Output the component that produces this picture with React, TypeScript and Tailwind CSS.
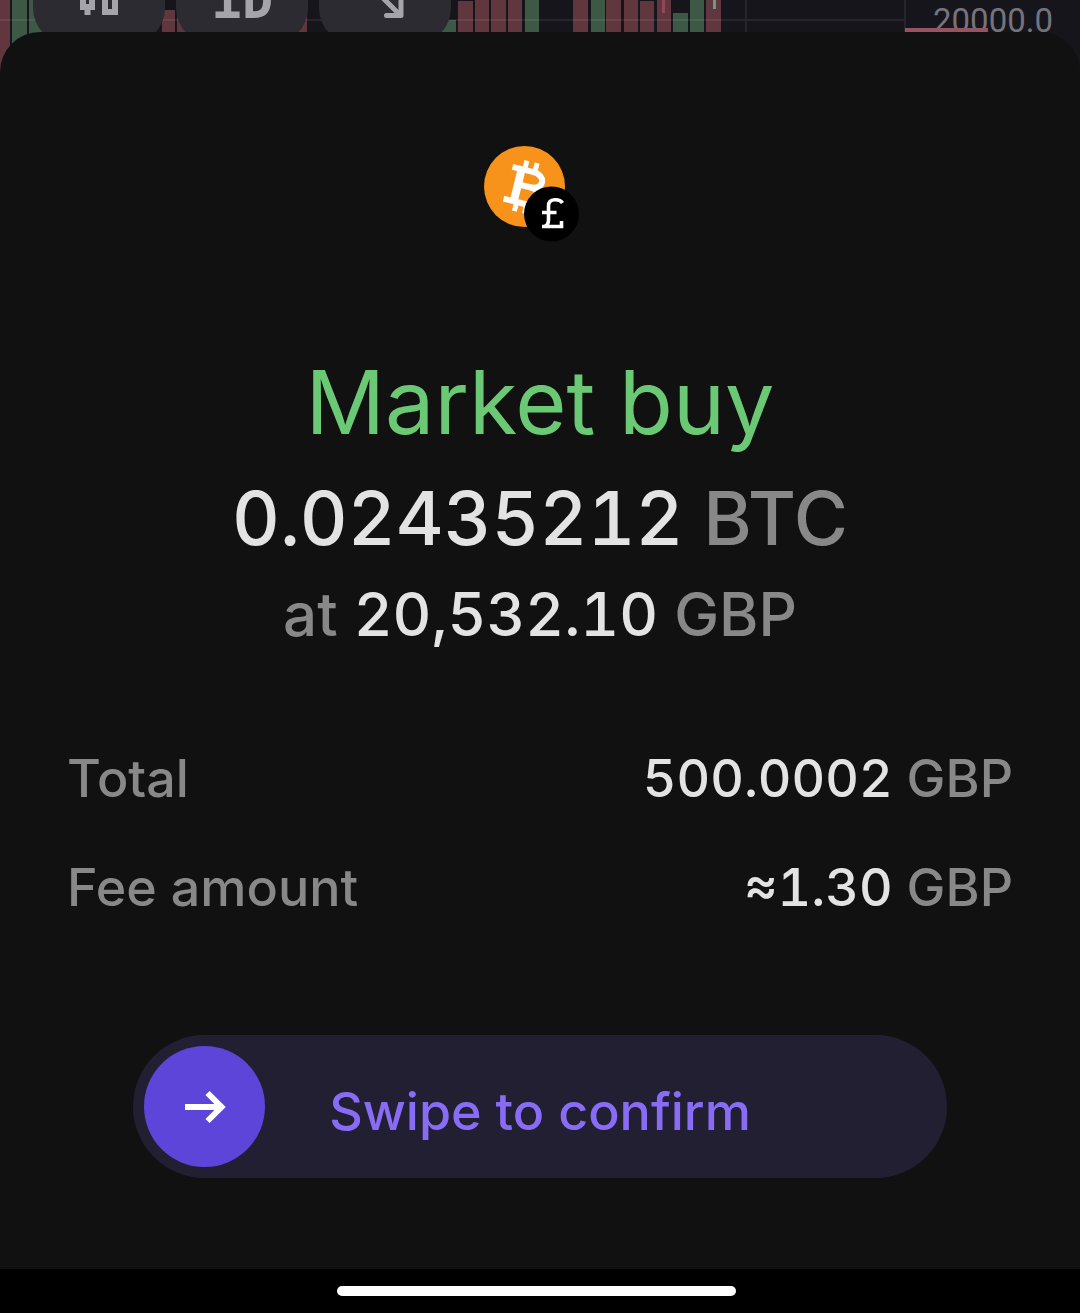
import React from 'react';

type Bar = { x: number; y: number; w: number; up?: boolean };

const bars: Bar[] = [
  { x: 0, y: 0, w: 10 },
  { x: 12, y: 0, w: 15, up: true },
  { x: 29, y: 0, w: 14, up: true },
  { x: 162, y: 10, w: 13 },
  { x: 177, y: 10, w: 14 },
  { x: 294, y: 10, w: 13 },
  { x: 442, y: 20, w: 14, up: true },
  { x: 458, y: 1, w: 15 },
  { x: 475, y: 0, w: 14 },
  { x: 491, y: 0, w: 15 },
  { x: 508, y: 0, w: 14 },
  { x: 525, y: 0, w: 14, up: true },
  { x: 573, y: 0, w: 15 },
  { x: 591, y: 0, w: 14, up: true },
  { x: 606, y: 0, w: 15 },
  { x: 624, y: 0, w: 14 },
  { x: 640, y: 1, w: 14 },
  { x: 657, y: 0, w: 14 },
  { x: 673, y: 13, w: 15, up: true },
  { x: 690, y: 0, w: 14, up: true },
  { x: 706, y: 0, w: 15 },
];

const VolumeBars = () => (
  <svg width="1080" height="72" viewBox="0 0 1080 72" className="absolute left-0 top-0 max-w-none" aria-hidden="true">
    {bars.map((bar) => (
      <rect key={bar.x} x={bar.x} y={bar.y} width={bar.w} height={72 - bar.y} fill={bar.up ? '#3e5846' : '#60363f'} />
    ))}
    <rect x="662" y="0" width="3" height="13" fill="#93465a" />
    <rect x="713" y="0" width="3" height="9" fill="#6f9a79" />
    <path d="M0 20H905M746 0V72M905 0V72" stroke="#ffffff" strokeOpacity="0.07" strokeWidth="2" />
  </svg>
);

const CandlesIcon = () => (
  <svg width="42" height="48" viewBox="0 0 42 48" fill="none" stroke="currentColor" strokeWidth="6" aria-hidden="true">
    <path d="M5 9H14V31H5z" />
    <path d="M9.500 0V8M9.500 32V39" strokeWidth="6" />
    <path d="M27 9H37V36H27z" />
  </svg>
);

const ArrowDownRightIcon = () => (
  <svg width="44" height="44" viewBox="0 0 44 44" fill="none" stroke="currentColor" strokeWidth="5" strokeLinecap="round" strokeLinejoin="round" aria-hidden="true">
    <path d="M8 8L37 37M23.500 37.500H38V21" />
  </svg>
);

const ChartChip = ({ label, children }: { label: string; children: React.ReactNode }) => (
  <button
    type="button"
    aria-label={label}
    className="flex h-[88px] w-[132px] shrink-0 items-center justify-center rounded-[36px] bg-[#2d2b32] font-['DejaVu_Sans_Mono',monospace] text-[52px] font-bold leading-none text-[#a5a4aa]"
  >
    {children}
  </button>
);

const PairIcon = () => (
  <svg width="112" height="96" viewBox="0 0 112 96" aria-hidden="true">
    <circle cx="40.500" cy="40.500" r="40.500" fill="#f7931a" />
    <g transform="translate(41 41) rotate(14)" fill="none" stroke="#ffffff">
      <path d="M-17 -16.500H4C19 -16.500 19 -1 5 -1H-7M5 -1C22 -1 22 16.500 5 16.500H-18" strokeWidth="6" />
      <path d="M-7.500 -17V17" strokeWidth="8" />
      <path d="M-4.500 -26V-17M6 -26V-17M-4.500 17V26M6 17V26" strokeWidth="5" />
    </g>
    <circle cx="67.500" cy="68" r="27.500" fill="#000000" />
    <path
      d="M78.500 57C76 53 64.500 51.500 64.500 60V74C64.500 78 62.500 80 60 80.500H77.500V75M58 66.500H72.500M58 80.500H62"
      fill="none"
      stroke="#ffffff"
      strokeWidth="3.600"
    />
  </svg>
);

const Row = ({ label, value, unit }: { label: string; value: string; unit: string }) => (
  <div className="flex items-baseline justify-between">
    <dt className="text-[#888888]">{label}</dt>
    <dd className="text-[#e3e3e3]">
      {value} <span className="text-[#888888]">{unit}</span>
    </dd>
  </div>
);

export default function App() {
  return (
    <div className="flex min-h-screen flex-col overflow-hidden bg-black font-['Inter',sans-serif]">
      {/* chart behind the sheet */}
      <div className="relative h-[72px] overflow-hidden bg-[#16151b]">
        <VolumeBars />
        <div className="relative -mt-[44px] flex gap-[11px] pl-[33px]">
          <ChartChip label="Chart type"><CandlesIcon /></ChartChip>
          <ChartChip label="Interval 1D">1D</ChartChip>
          <ChartChip label="Collapse chart"><ArrowDownRightIcon /></ChartChip>
        </div>
        <span className="absolute right-[27px] top-0 font-['Roboto',sans-serif] text-[33px] leading-[42px] text-[#75747b]">20000.0</span>
        <div className="absolute right-[92px] top-[28px] h-1 w-[83px] bg-[#945560]" />
      </div>

      {/* confirmation sheet */}
      <main className="relative -mt-10 flex flex-1 flex-col rounded-t-[40px] bg-[#111111] pt-[114px] font-medium tabular-nums">
        <div className="flex justify-center">
          <PairIcon />
        </div>

        <div className="mt-[104px] flex flex-col items-center gap-4 text-center text-[#e3e3e3]">
          <h1 className="text-[88px] font-normal leading-[112px] text-[#6bc975]">Market buy</h1>
          <p className="text-[74px] leading-[88px]">
            0.02435212 <span className="text-[#888888]">BTC</span>
          </p>
          <p className="text-[60px] leading-[72px]">
            <span className="text-[#888888]">at</span> 20,532.10 <span className="text-[#888888]">GBP</span>
          </p>
        </div>

        <dl className="mt-[97px] flex flex-col gap-[45px] px-[67px] text-[52px] leading-[64px]">
          <Row label="Total" value="500.0002" unit="GBP" />
          <Row label="Fee amount" value="≈1.30" unit="GBP" />
        </dl>

        <div className="mt-[115px] px-[133px] pb-[90px]">
          <button
            type="button"
            className="relative flex h-[143px] w-full items-center justify-center rounded-full bg-[#231f33] pt-[10px] text-[52px] leading-[64px] text-[#886cf5]"
          >
            <span className="absolute left-[11px] top-[11px] flex size-[121px] items-center justify-center rounded-full bg-[#5e45d9] text-white">
              <svg width="42" height="36" viewBox="0 0 42 36" fill="none" stroke="currentColor" strokeWidth="6" aria-hidden="true">
                <path d="M1 18H37M23.500 4L37.500 18L23.500 32" />
              </svg>
            </span>
            Swipe to confirm
          </button>
        </div>
      </main>

      {/* home indicator */}
      <div className="flex h-11 items-center justify-center pr-2">
        <div className="h-[10px] w-[399px] rounded-full bg-white" />
      </div>
    </div>
  );
}
